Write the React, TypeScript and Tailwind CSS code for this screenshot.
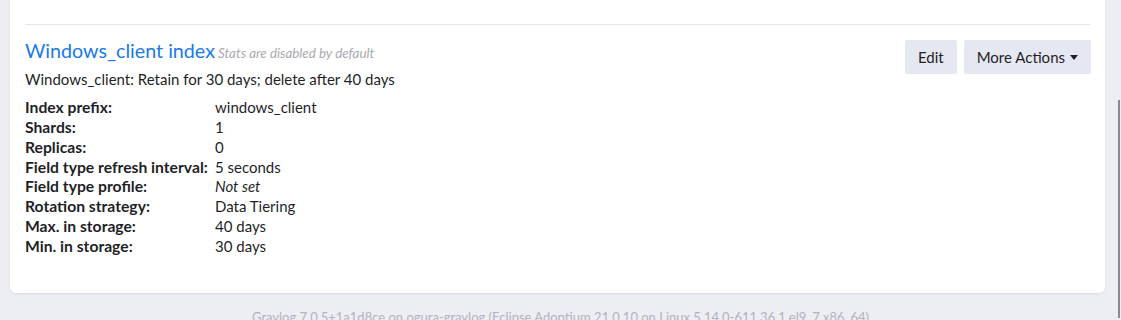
import React from "react";

const rows: [string, string, boolean?][] = [
  ["Index prefix:", "windows_client"],
  ["Shards:", "1"],
  ["Replicas:", "0"],
  ["Field type refresh interval:", "5 seconds"],
  ["Field type profile:", "Not set", true],
  ["Rotation strategy:", "Data Tiering"],
  ["Max. in storage:", "40 days"],
  ["Min. in storage:", "30 days"],
];

export default function App() {
  return (
    <div
      className="relative h-[320px] w-[1121px] overflow-hidden bg-[#ededf4] text-[#1f1f28]"
      style={{ fontFamily: "Lato, 'Open Sans', sans-serif" }}
    >
      <div className="ml-[10px] mr-[16px] -mt-[20px] rounded-b-[6px] bg-white px-[15px] pb-[36px] shadow-[0_1px_3px_rgba(0,0,0,0.08)]">
        {/* previous item tail */}
        <div className="flex text-[15px] leading-[20px]">
          <div className="w-[190px] text-[15.7px] font-bold">Min. in storage:</div>
          <div>30 days</div>
        </div>
        <div className="mt-[24px] border-t border-[#e5e5ea]" />
        <div className="flex items-start justify-between pt-[13px]">
          <div>
            <div className="flex items-baseline gap-[3px]">
              <span className="text-[19.7px] leading-[26px] text-[#2079e8]">Windows_client index</span>
              <span className="text-[13.4px] italic text-[#a9a9b0]">Stats are disabled by default</span>
            </div>
            <div className="mt-[5px] text-[15px] leading-[20px]">
              Windows_client: Retain for 30 days; delete after 40 days
            </div>
          </div>
          <div className="-mr-[1px] mt-[2px] flex gap-[7px]">
            <button className="h-[34px] rounded-[2px] bg-[#e6e8f1] px-[13px] text-[15px] text-[#1f1f28]">Edit</button>
            <button className="flex h-[34px] items-center gap-[5px] rounded-[2px] bg-[#e6e8f1] px-[13px] text-[15px] text-[#1f1f28]">
              More Actions
              <svg width="8" height="5" viewBox="0 0 8 5">
                <path d="M0 0h8L4 5z" fill="#1f1f28" />
              </svg>
            </button>
          </div>
        </div>
        <div className="mt-[9px] text-[15px] leading-[19.86px]">
          {rows.map(([k, v, it]) => (
            <div key={k} className="flex">
              <div className="w-[190px] whitespace-nowrap text-[15.7px] font-bold">{k}</div>
              <div className={it ? "italic" : ""}>{v}</div>
            </div>
          ))}
        </div>
      </div>
      <div className="mt-[14px] text-center text-[13px] leading-[20px] text-[#b3b3bb]">
        Graylog 7.0.5+1a1d8ce on ogura-graylog (Eclipse Adoptium 21.0.10 on Linux 5.14.0-611.36.1.el9_7.x86_64)
      </div>
      <div className="absolute right-[1px] top-[100px] h-[218px] w-[2px] bg-[#8a8a8a]" />
    </div>
  );
}
